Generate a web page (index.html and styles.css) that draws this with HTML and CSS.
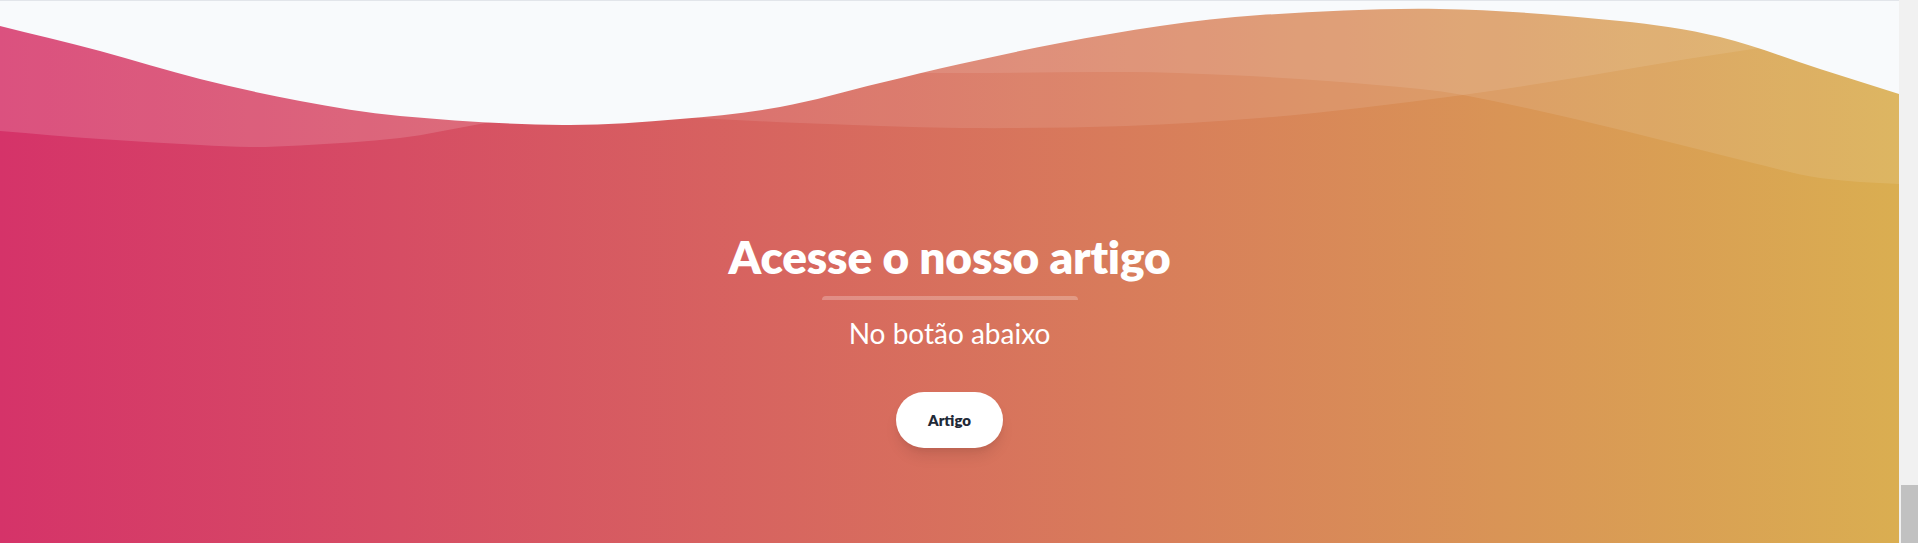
FILE: index.html
```html
<!DOCTYPE html>
<html lang="pt">
<head>
<meta charset="utf-8">
<title>Acesse o nosso artigo</title>
<link rel="stylesheet" href="styles.css">
</head>
<body>
<div class="page">
  <main class="main">
    <svg class="wave-top" viewBox="0 0 1899 200" preserveAspectRatio="none" xmlns="http://www.w3.org/2000/svg">
      <path class="layer l3" d="M0,0 L0,130 C33.3,132.7 66.7,135.7 100,138 C133.3,140.3 166.7,142.2 200,144 C216.7,144.9 233.3,145.9 250,146 C266.7,146.1 283.3,145.5 300,144.5 C333.3,142.5 366.7,141 400,137 C426.7,133.8 453.3,127.8 480,123 C506.7,118.2 533.3,113.1 560,108 L560,0 Z"/>
      <path class="layer l1" d="M600,0 L600,112 C632.3,113.7 664.7,115.4 697,117 C731.3,118.7 765.7,120.7 800,122 C853.3,124 906.7,126.5 960,127 C1015.7,127.5 1071.3,126.8 1127,125 C1171.3,123.5 1215.7,120.4 1260,117 C1293.3,114.4 1326.7,110.8 1360,107 C1394.3,103.1 1428.7,98.8 1463,94 C1504.3,88.2 1545.7,81.7 1587,75 C1620.3,69.6 1653.7,63.4 1687,58 C1709,54.4 1731,51.5 1753,48 C1775.3,44.5 1797.7,40.7 1820,37 L1820,0 Z"/>
      <path class="layer l2" d="M800,0 L800,71 C853.3,71.3 906.7,72 960,72 C1015.7,72 1071.3,70.6 1127,71 C1160.3,71.25 1193.7,72.5 1227,74 C1260.3,75.5 1293.7,77.6 1327,80 C1358,82.3 1389,84.8 1420,88 C1434.3,89.5 1448.7,91.3 1463,94 C1493,99.6 1523,106.2 1553,113 C1586.3,120.5 1619.7,128.8 1653,137 C1686.3,145.2 1719.7,154 1753,162 C1775.3,167.4 1797.7,173.8 1820,177 C1846.3,180.8 1872.7,181.7 1899,183 L1899,0 Z"/>
      <path class="wave" d="M0,0 L0,25 C33.3,33.3 66.7,41.2 100,50 C133.3,58.8 166.7,69.7 200,78 C233.3,86.3 266.7,93.8 300,100 C333.3,106.2 366.7,112 400,115 C454.3,119.9 508.7,123.4 563,124 C602,124.4 641,121.2 680,118 C713.3,115.2 746.7,112 780,106 C813.3,100 846.7,90 880,82 C906.7,75.6 933.3,68.9 960,63 C993.3,55.6 1026.7,48.3 1060,42 C1093.3,35.7 1126.7,29.7 1160,25 C1193.3,20.3 1226.7,16 1260,14 C1320,10.3 1380,7 1440,8 C1500,9 1560,14 1620,20 C1653.3,23.3 1686.7,28 1720,36 C1753.3,44 1786.7,57.4 1820,68 C1846.3,76.4 1872.7,84.7 1899,93 L1899,0 Z"/>
    </svg>
    <section class="cta">
      <h2 class="cta-title">Acesse o nosso artigo</h2>
      <div class="cta-bar"></div>
      <h3 class="cta-sub">No botão abaixo</h3>
      <button class="cta-btn" type="button">Artigo</button>
    </section>
  </main>
  <div class="scrollbar"><div class="thumb"></div></div>
</div>
</body>
</html>
```
FILE: styles.css
```css
html, body {
  margin: 0;
  padding: 0;
  height: 100%;
  overflow: hidden;
}

body {
  font-family: "Lato", "Liberation Sans", sans-serif;
}

.page {
  display: flex;
  height: 100vh;
}

.main {
  flex: 1;
  min-width: 0;
  border-top: 1px solid #e2e5ea;
  background: linear-gradient(90deg, #d53369 0%, #daae51 100%);
  color: #ffffff;
}

.wave-top {
  display: block;
  width: 100%;
  height: 200px;
}

.wave {
  fill: #f8fafc;
}

.layer {
  fill: #ffffff;
}

.l1 { opacity: 0.1; }
.l2 { opacity: 0.1; }
.l3 { opacity: 0.15; }

.cta {
  display: flex;
  flex-direction: column;
  align-items: center;
  padding-top: 28px;
  text-align: center;
}

.cta-title {
  margin: 0;
  font-size: 46px;
  line-height: 56px;
  font-weight: 800;
  letter-spacing: -0.2px;
}

.cta-bar {
  margin-top: 11px;
  width: 256px;
  height: 4px;
  border-radius: 4px 4px 0 0;
  background: rgba(255, 255, 255, 0.25);
}

.cta-sub {
  margin: 15px 0 0;
  font-size: 28px;
  line-height: 36px;
  font-weight: 400;
}

.cta-btn {
  margin-top: 41px;
  padding: 16px 32px;
  border: 0;
  border-radius: 9999px;
  background: #ffffff;
  color: #1f2937;
  font-family: inherit;
  font-size: 15px;
  line-height: 24px;
  font-weight: 800;
  box-shadow: 0 10px 15px -3px rgba(0, 0, 0, 0.1), 0 4px 6px -2px rgba(0, 0, 0, 0.05);
}

.scrollbar {
  width: 19px;
  flex: none;
  background: #f1f1f1;
  display: flex;
  flex-direction: column;
  justify-content: flex-end;
}

.thumb {
  height: 58px;
  margin-left: 2px;
  background: #c1c1c1;
}
```
